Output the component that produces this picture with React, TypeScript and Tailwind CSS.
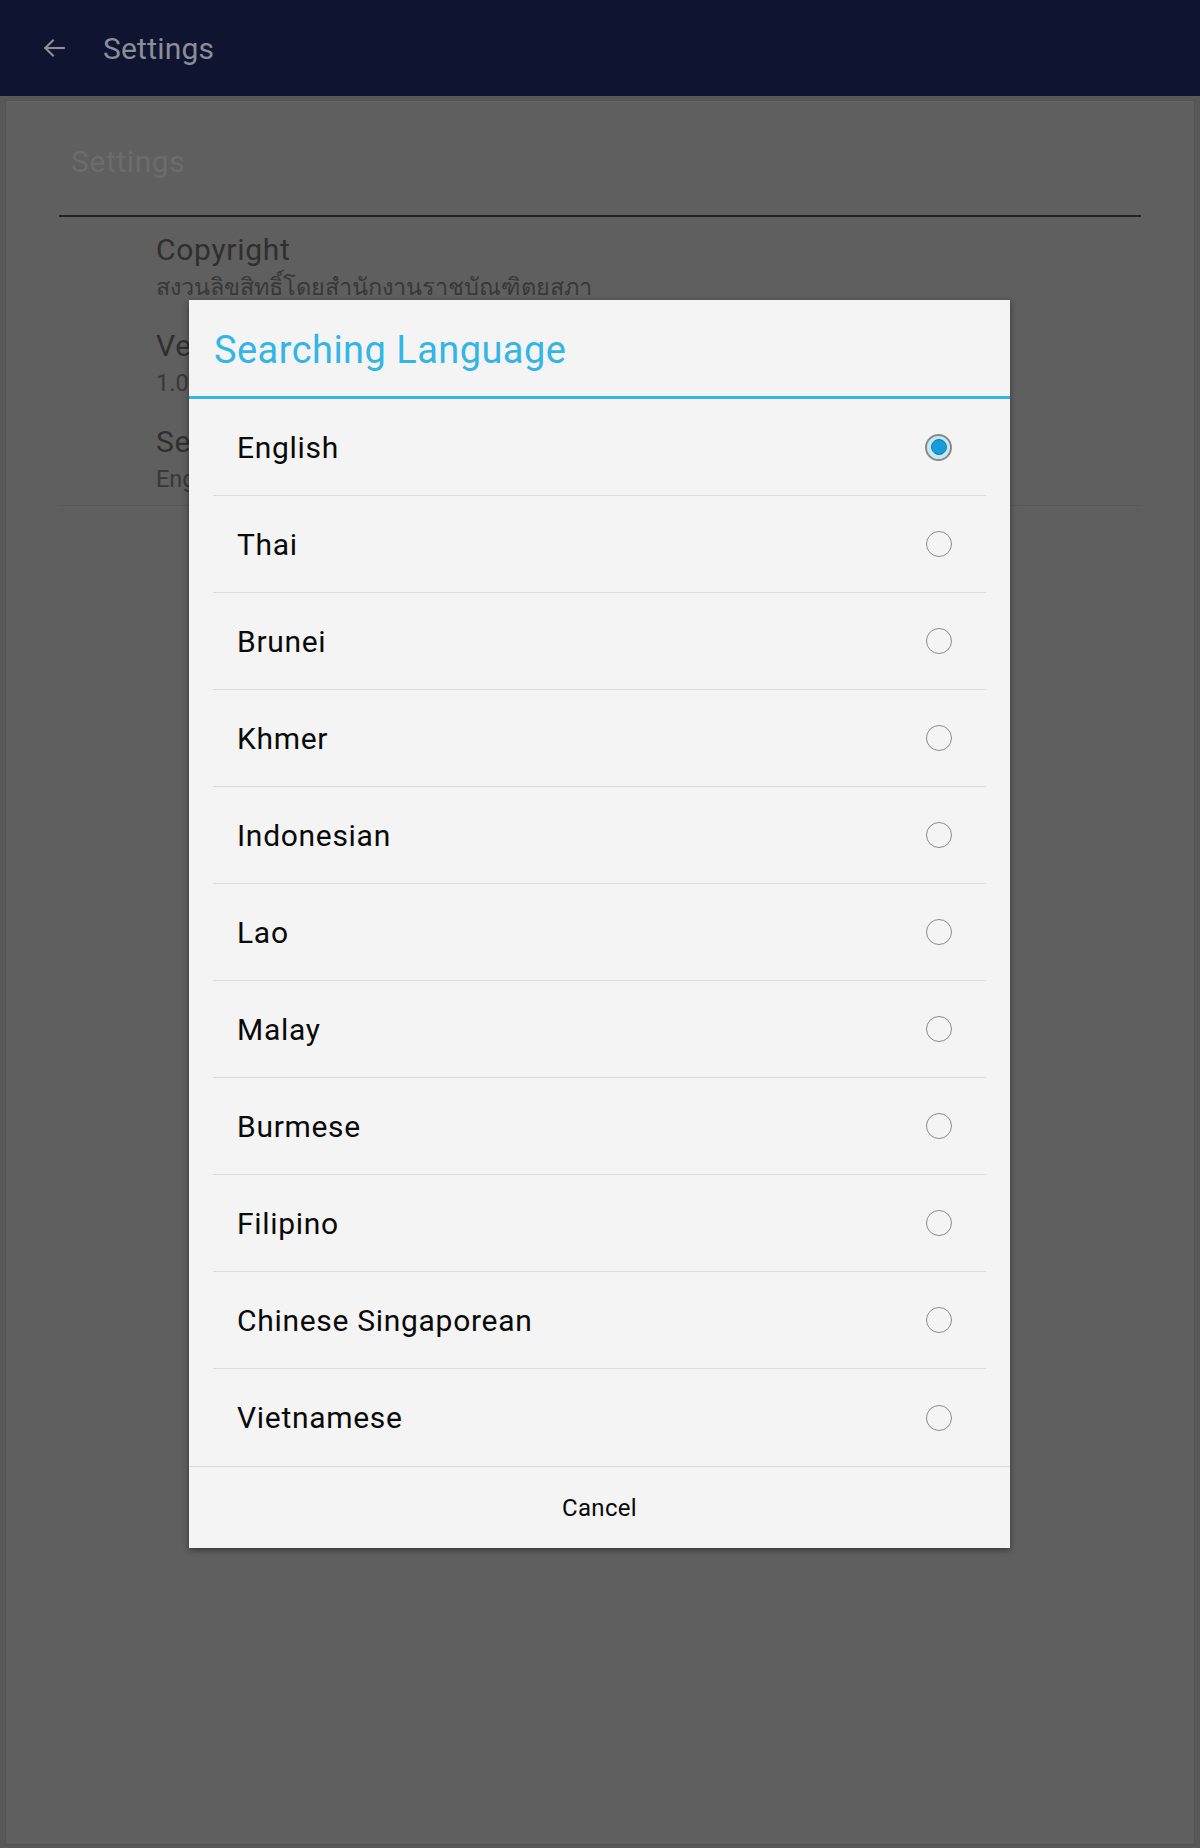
const languages = [
  "English",
  "Thai",
  "Brunei",
  "Khmer",
  "Indonesian",
  "Lao",
  "Malay",
  "Burmese",
  "Filipino",
  "Chinese Singaporean",
  "Vietnamese",
];

const settingsItems = [
  { title: "Copyright", value: "สงวนลิขสิทธิ์โดยสำนักงานราชบัณฑิตยสภา" },
  { title: "Version", value: "1.0" },
  { title: "Searching Language", value: "English" },
];

const BackArrow = () => (
  <svg width="26" height="26" viewBox="0 0 24 24" fill="none" stroke="#8b8d99" strokeWidth="2" strokeLinecap="square">
    <path d="M21 12H4" />
    <path d="M11 5l-7 7 7 7" />
  </svg>
);

const Radio = ({ checked }: { checked: boolean }) => {
  if (checked) {
    return (
      <div className="flex h-[27px] w-[27px] items-center justify-center rounded-full border-2 border-[#8a8a8a] bg-[#c6e8f6]">
        <div className="h-[16px] w-[16px] rounded-full border border-[#0d7fb4] bg-[#189bd6]" />
      </div>
    );
  }
  return <div className="h-[26px] w-[26px] rounded-full border-[1.5px] border-[#8c8c8c]" />;
};

const LanguageRow = ({ label, checked, last }: { label: string; checked: boolean; last: boolean }) => {
  return (
    <div className={`${last ? "" : "border-b border-[#dcdcdc]"} flex h-[97px] items-center justify-between pl-[24px] pr-[34px]`}>
      <span className="text-[30px] tracking-[0.7px] text-[#0a0a0a]">{label}</span>
      <Radio checked={checked} />
    </div>
  );
};

export default function App() {
  return (
    <div className="relative h-[1848px] w-[1200px] overflow-hidden bg-[#585858] font-['Roboto','Noto_Sans',sans-serif]">
      <div className="flex h-[96px] items-center bg-[#0f1430]">
        <div className="ml-[41px]">
          <BackArrow />
        </div>
        <span className="ml-[36px] text-[30px] tracking-[0.2px] text-[#8b8d99]">Settings</span>
      </div>

      <div className="px-[5px] pt-[4px]">
        <div className="h-[1745px] border border-[#535353] bg-[#5f5f5f] shadow-[inset_0_1px_0_#666]">
          <div className="h-[114px] pl-[65px] pt-[41px]">
            <span className="text-[30px] leading-[40px] tracking-[0.6px] text-[#6c6c6c]">Settings</span>
          </div>
          <div className="mx-[53px] h-[2px] bg-[#222]" />
          <div className="mx-[53px] border-b border-[#575757]">
            {settingsItems.map((item) => (
              <div key={item.title} className="pb-[9px] pl-[97px] pt-[15px]">
                <div className="text-[30px] leading-[36px] tracking-[0.7px] text-[#2f2f2f]">{item.title}</div>
                <div className="pt-[2px] text-[23.5px] leading-[34px] text-[#383838]">{item.value}</div>
              </div>
            ))}
          </div>
        </div>
      </div>

      <div className="absolute left-[189px] top-[300px] w-[821px] bg-[#f4f4f4] shadow-[0_2px_6px_rgba(0,0,0,0.45)]">
        <div className="flex h-[96px] items-center pl-[25px] pt-[4px]">
          <span className="text-[38px] tracking-[0.45px] text-[#33b5e5]">Searching Language</span>
        </div>
        <div className="h-[3px] bg-[#33b5e5]" />
        <div className="px-[24px]">
          {languages.map((lang, i) => (
            <LanguageRow key={lang} label={lang} checked={i === 0} last={i === languages.length - 1} />
          ))}
        </div>
        <div className="flex h-[82px] items-center justify-center border-t border-[#dcdcdc]">
          <span className="text-[24px] tracking-[0.3px] text-[#0a0a0a]">Cancel</span>
        </div>
      </div>
    </div>
  );
}
